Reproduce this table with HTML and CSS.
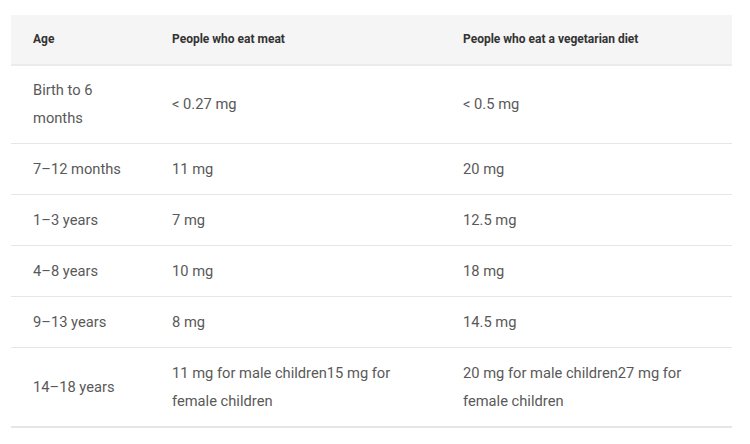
FILE: index.html
```html
<!DOCTYPE html>
<html lang="en">
<head>
<meta charset="utf-8">
<title>Iron intake table</title>
<link rel="stylesheet" href="styles.css">
</head>
<body>
<table class="iron-table">
  <colgroup>
    <col class="col-age">
    <col class="col-val">
    <col class="col-val">
  </colgroup>
  <thead>
    <tr>
      <th>Age</th>
      <th>People who eat meat</th>
      <th>People who eat a vegetarian diet</th>
    </tr>
  </thead>
  <tbody>
    <tr><td>Birth to 6 months</td><td>&lt; 0.27 mg</td><td>&lt; 0.5 mg</td></tr>
    <tr><td>7–12 months</td><td>11 mg</td><td>20 mg</td></tr>
    <tr><td>1–3 years</td><td>7 mg</td><td>12.5 mg</td></tr>
    <tr><td>4–8 years</td><td>10 mg</td><td>18 mg</td></tr>
    <tr><td>9–13 years</td><td>8 mg</td><td>14.5 mg</td></tr>
    <tr><td>14–18 years</td><td>11 mg for male children15 mg for female children</td><td>20 mg for male children27 mg for female children</td></tr>
  </tbody>
</table>
</body>
</html>
```
FILE: styles.css
```css
html, body {
  margin: 0;
  background: #ffffff;
}
body {
  padding: 15px 0 0 11px;
  font-family: Roboto, "Liberation Sans", sans-serif;
}
.iron-table {
  width: 721px;
  table-layout: fixed;
  border-collapse: collapse;
  border-bottom: 2px solid #e6e6e6;
}
.col-age { width: 139px; }
.col-val { width: 291px; }
.iron-table th {
  background: #f5f5f5;
  color: #333333;
  font-size: 12px;
  font-weight: 700;
  text-align: left;
  line-height: 17px;
  padding: 16px 22px;
  border-bottom: 2px solid #ebebeb;
}
.iron-table td {
  color: #595959;
  font-size: 14.7px;
  line-height: 28px;
  padding: 11px 22px;
  vertical-align: middle;
  border-top: 1px solid #e6e6e6;
}
.iron-table tbody tr:first-child td {
  border-top: none;
  padding-top: 10px;
}
```
